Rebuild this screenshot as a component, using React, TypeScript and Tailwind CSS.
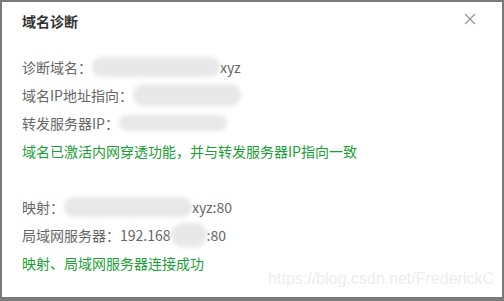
const font = { fontFamily: '"Noto Sans CJK SC", "Noto Sans", sans-serif' };

function Blur({ w, h = 18 }: { w: number; h?: number }) {
  return (
    <span
      className="inline-block align-middle rounded-full bg-[#e8e8e8] blur-[2px]"
      style={{ width: w, height: h }}
    />
  );
}

export default function App() {
  return (
    <div className="w-[504px] h-[301px] bg-[#7a7a7a] pt-[2px] pl-[2px] pr-[2px] pb-[4px]">
      <div className="relative h-full bg-white px-[20px]" style={font}>
        <div className="pt-[8px] text-[14px] leading-[22px] font-bold text-[#333]">域名诊断</div>

        <svg
          className="absolute right-[26px] top-[11px]"
          width="12"
          height="12"
          viewBox="0 0 12 12"
          fill="none"
          stroke="#8a8f99"
          strokeWidth="1.1"
        >
          <path d="M1 1L11 11M11 1L1 11" />
        </svg>

        <div className="mt-[21px] text-[14px] leading-[28px] text-[#666]">
          <div className="flex items-center">
            <span>诊断域名：</span>
            <Blur w={128} h={20} />
            <span>xyz</span>
          </div>
          <div className="flex items-center">
            <span>域名IP地址指向：</span>
            <Blur w={108} h={22} />
          </div>
          <div className="flex items-center">
            <span>转发服务器IP：</span>
            <Blur w={108} h={16} />
          </div>
          <div className="text-[#1aa035]">域名已激活内网穿透功能，并与转发服务器IP指向一致</div>
          <div className="h-[28px]" />
          <div className="flex items-center">
            <span>映射：</span>
            <Blur w={128} h={20} />
            <span>xyz:80</span>
          </div>
          <div className="flex items-center">
            <span>局域网服务器：192.168</span>
            <Blur w={36} h={24} />
            <span>:80</span>
          </div>
          <div className="text-[#1aa035]">映射、局域网服务器连接成功</div>
        </div>

        <div
          className="absolute right-[8px] bottom-[6px] text-[16px] text-[#ededed]"
          style={{ fontFamily: '"Liberation Sans", Arial, sans-serif' }}
        >
          https://blog.csdn.net/FrederickC
        </div>
      </div>
    </div>
  );
}
